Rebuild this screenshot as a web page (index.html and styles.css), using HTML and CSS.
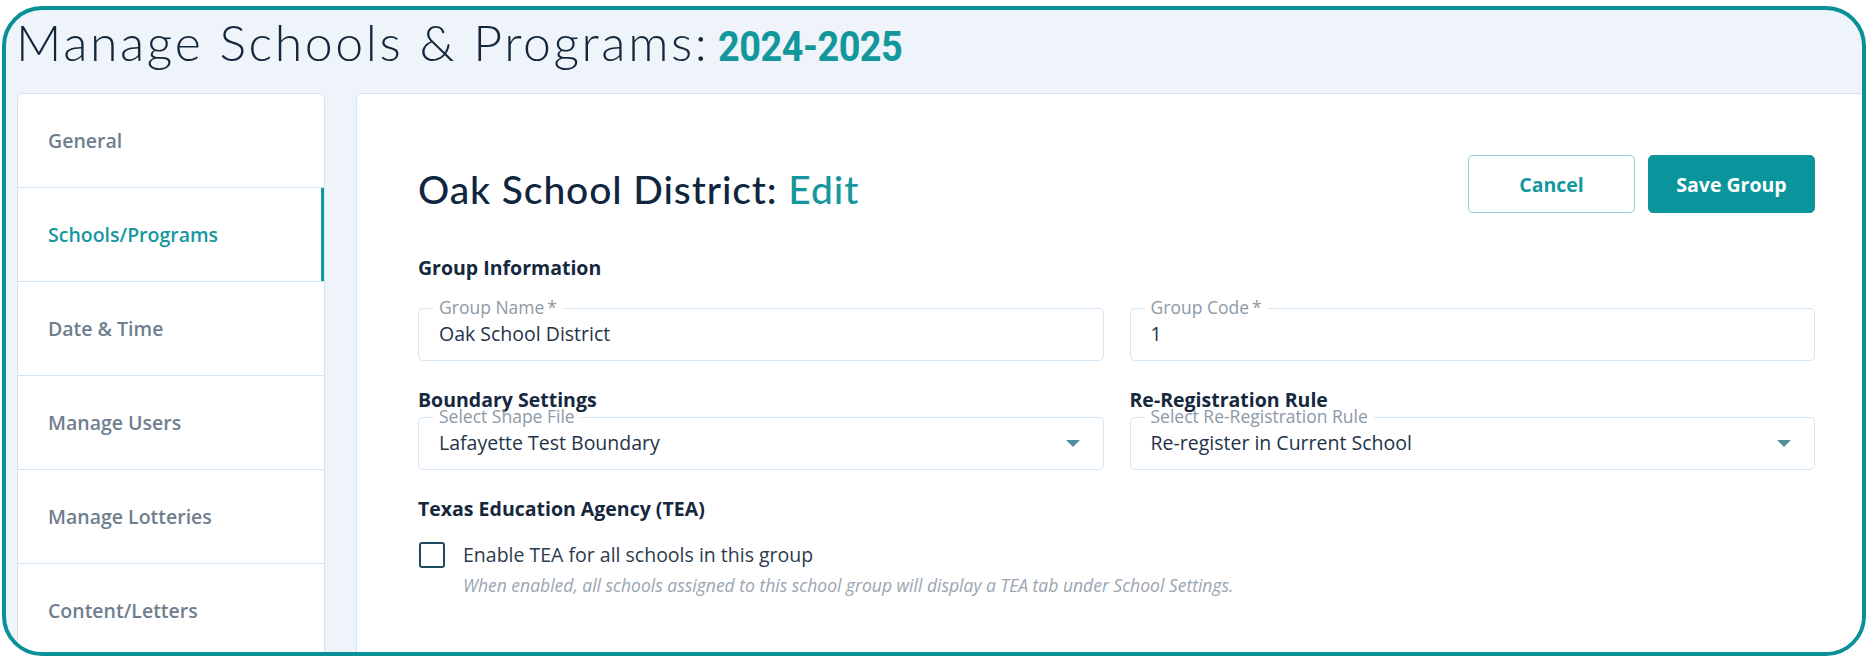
FILE: index.html
```html
<!DOCTYPE html>
<html lang="en">
<head>
<meta charset="utf-8">
<title>Manage Schools &amp; Programs</title>
<link rel="stylesheet" href="styles.css">
</head>
<body>
<div class="frame">
  <header class="page-head">
    <h1 class="page-title">Manage Schools &amp; Programs:</h1>
    <span class="page-year">2024-2025</span>
  </header>
  <div class="page-body">
    <nav class="sidebar">
      <div class="nav-item">General</div>
      <div class="nav-item active">Schools/Programs</div>
      <div class="nav-item">Date &amp; Time</div>
      <div class="nav-item">Manage Users</div>
      <div class="nav-item">Manage Lotteries</div>
      <div class="nav-item">Content/Letters</div>
      <div class="nav-item"></div>
    </nav>
    <main class="main-card">
      <div class="content">
        <div class="head-row">
          <h2 class="edit-title">Oak School District: <span class="accent">Edit</span></h2>
          <div class="actions">
            <button class="btn btn-outline">Cancel</button>
            <button class="btn btn-solid">Save Group</button>
          </div>
        </div>

        <h3 class="section-title first">Group Information</h3>
        <div class="grid">
          <div class="field">
            <span class="field-label">Group Name&thinsp;*</span>
            <span class="field-value">Oak School District</span>
          </div>
          <div class="field">
            <span class="field-label">Group Code&thinsp;*</span>
            <span class="field-value">1</span>
          </div>
        </div>

        <div class="grid row-two">
          <div class="col">
            <h3 class="section-title">Boundary Settings</h3>
            <div class="field select">
              <span class="field-label">Select Shape File</span>
              <span class="field-value">Lafayette Test Boundary</span>
              <svg class="caret" width="14" height="7" viewBox="0 0 14 7"><path d="M0 0 L14 0 L7 7 Z" fill="#4f8f9a"/></svg>
            </div>
          </div>
          <div class="col">
            <h3 class="section-title">Re-Registration Rule</h3>
            <div class="field select">
              <span class="field-label">Select Re-Registration Rule</span>
              <span class="field-value">Re-register in Current School</span>
              <svg class="caret" width="14" height="7" viewBox="0 0 14 7"><path d="M0 0 L14 0 L7 7 Z" fill="#4f8f9a"/></svg>
            </div>
          </div>
        </div>

        <h3 class="section-title tea">Texas Education Agency (TEA)</h3>
        <label class="check-row">
          <span class="checkbox"></span>
          <span class="check-text">Enable TEA for all schools in this group</span>
        </label>
        <p class="helper">When enabled, all schools assigned to this school group will display a TEA tab under School Settings.</p>
      </div>
    </main>
  </div>
</div>
</body>
</html>
```

FILE: styles.css
```css
* { box-sizing: border-box; }

html, body {
  margin: 0;
  padding: 0;
  background: #ffffff;
}

body {
  font-family: "Open Sans", "Liberation Sans", sans-serif;
  color: #1f3349;
}

.frame {
  width: 1864px;
  height: 650px;
  margin: 6px 0 0 2px;
  border: 4px solid #0a9198;
  border-radius: 40px;
  overflow: hidden;
  background: #eef4f9;
}

.page-head {
  height: 83px;
  padding: 2px 0 0 10px;
  display: flex;
  align-items: baseline;
  gap: 9px;
}

.page-title {
  margin: 0;
  font-family: "Lato", "Open Sans", sans-serif;
  font-weight: 300;
  font-size: 50px;
  line-height: 60px;
  color: #14263c;
  letter-spacing: 2.6px;
  white-space: nowrap;
}

.page-year {
  display: inline-block;
  font-family: "Roboto", "Liberation Sans", sans-serif;
  font-weight: 700;
  font-size: 42px;
  color: #12979d;
  letter-spacing: -0.5px;
  transform: scaleX(0.9);
  transform-origin: left center;
}

.page-body {
  display: flex;
  gap: 31px;
  padding-left: 11px;
}

.sidebar {
  width: 308px;
  flex: none;
  background: #ffffff;
  border: 1px solid #d3e4f2;
  border-radius: 6px 6px 0 0;
  height: 620px;
}

.nav-item {
  height: 94px;
  border-bottom: 1px solid #d3e4f2;
  padding-left: 30px;
  display: flex;
  align-items: center;
  font-size: 19.5px;
  font-weight: 600;
  color: #6f7e8e;
}

.nav-item.active {
  color: #15979d;
  box-shadow: inset -3px 0 0 #15979d;
}

.main-card {
  flex: 1;
  margin-right: -60px;
  background: #ffffff;
  border: 1px solid #d3e4f2;
  border-radius: 6px 0 0 0;
  height: 620px;
  padding: 61px 0 0 61px;
}

.content {
  width: 1397px;
}

.head-row {
  display: flex;
  justify-content: space-between;
  align-items: flex-start;
  height: 58px;
}

.edit-title {
  margin: 0;
  padding-top: 10px;
  font-family: "Lato", "Open Sans", sans-serif;
  font-weight: 500;
  font-size: 39px;
  line-height: 48px;
  letter-spacing: 0.9px;
  color: #10263f;
  white-space: nowrap;
}

.accent {
  color: #14979d;
}

.actions {
  display: flex;
  gap: 13px;
}

.btn {
  width: 167px;
  height: 58px;
  border-radius: 5px;
  font-family: "Open Sans", sans-serif;
  font-weight: 700;
  font-size: 19.5px;
  cursor: pointer;
}

.btn-outline {
  background: #ffffff;
  border: 1.5px solid #8fd0d3;
  color: #15979d;
}

.btn-solid {
  background: #0a959c;
  border: 1px solid #0a959c;
  color: #ffffff;
}

.section-title {
  margin: 0;
  font-size: 19.5px;
  font-weight: 700;
  line-height: 26px;
  color: #15283e;
  white-space: nowrap;
}

.section-title.first {
  margin-top: 42px;
  margin-bottom: 27px;
}

.grid {
  display: grid;
  grid-template-columns: 1fr 1fr;
  column-gap: 26px;
}

.row-two {
  margin-top: 26px;
}

.row-two .field {
  margin-top: 4px;
}

.field {
  position: relative;
  height: 53px;
  border: 1px solid #d3e4f2;
  border-radius: 5px;
  padding: 12px 20px 0 20px;
}

.field-label {
  position: absolute;
  top: -12px;
  left: 14px;
  padding: 0 6px;
  background: transparent;
  font-size: 17.5px;
  line-height: 20px;
  color: #8d99a6;
  white-space: nowrap;
}

.field-label::before {
  content: "";
  position: absolute;
  left: 0;
  right: 0;
  top: 10px;
  height: 3px;
  background: #ffffff;
  z-index: -1;
}

.field-label {
  z-index: 1;
  isolation: isolate;
}

.field-value {
  display: block;
  font-size: 19.5px;
  line-height: 26px;
  color: #1f3349;
  white-space: nowrap;
}

.caret {
  position: absolute;
  right: 23px;
  top: 22px;
}

.section-title.tea {
  margin-top: 26px;
}

.check-row {
  display: flex;
  align-items: flex-start;
  gap: 18px;
  margin-top: 20px;
  padding-left: 1px;
}

.checkbox {
  width: 26px;
  height: 26px;
  border: 2px solid #1e4b5e;
  border-radius: 3px;
  flex: none;
}

.check-text {
  font-size: 19.5px;
  line-height: 26px;
  color: #2a3b4d;
}

.helper {
  margin: 6px 0 0 45px;
  font-size: 17.5px;
  font-style: italic;
  line-height: 22px;
  color: #9aa5b1;
  white-space: nowrap;
}
```
